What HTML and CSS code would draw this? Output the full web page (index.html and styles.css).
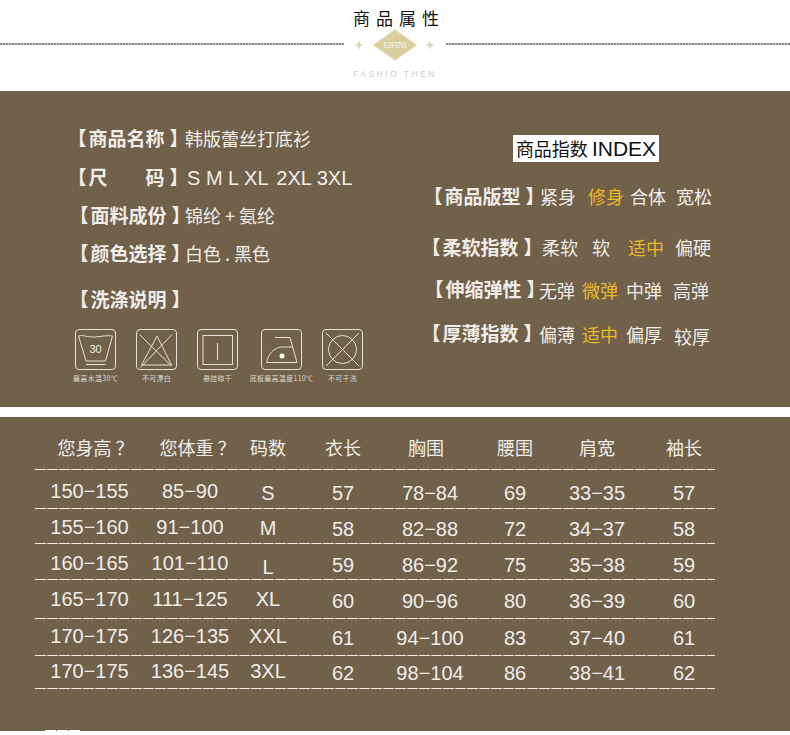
FILE: index.html
```html
<!DOCTYPE html>
<html lang="zh">
<head>
<meta charset="utf-8">
<title>商品属性</title>
<link rel="stylesheet" href="styles.css">
</head>
<body>
<header class="head">
  <h1 class="title">商品属性</h1>
  <div class="ornament">
    <span class="rule"></span>
    <svg class="badge" width="102" height="34" viewBox="0 0 102 34">
      <path class="spark" d="M15 11 L16.200 15 L20 16 L16.200 17 L15 21 L13.800 17 L10 16 L13.800 15 Z"/>
      <path class="spark" d="M86 11 L87.200 15 L91 16 L87.200 17 L86 21 L84.800 17 L81 16 L84.800 15 Z"/>
      <polygon class="gem" points="51,0.500 73,16 51,31.500 29,16"/>
      <text class="gem-text" x="51" y="19" text-anchor="middle">EIFINI</text>
    </svg>
    <span class="rule"></span>
  </div>
  <p class="tagline">FASHIO THEN</p>
</header>

<section class="panel attrs">
  <div class="left">
    <div class="row r1"><span class="label"><span class="brk">【</span>商品名称<span class="brk">】</span></span><span class="val">韩版蕾丝打底衫</span></div>
    <div class="row r2"><span class="label"><span class="brk">【</span>尺　　码<span class="brk">】</span></span><span class="val latin">S M L XL <span class="wide">2XL</span> 3XL</span></div>
    <div class="row r3"><span class="label nudge"><span class="brk">【</span>面料成份<span class="brk">】</span></span><span class="val">锦纶 + 氨纶</span></div>
    <div class="row r4"><span class="label nudge"><span class="brk">【</span>颜色选择<span class="brk">】</span></span><span class="val">白色 . 黑色</span></div>
    <div class="row r5"><span class="label nudge"><span class="brk">【</span>洗涤说明<span class="brk">】</span></span></div>
    <div class="icons">
      <figure class="care">
        <svg class="care-ico" viewBox="0 0 41 41">
          <rect x="0.500" y="0.500" width="40" height="40" rx="3.500"/>
          <path d="M3.500 7 C8 5.500 12 8.500 20 8 C27 7.500 32 6 37.500 7 L30.500 32 H11 Z"/>
          <path d="M11 35.500 H30.500"/>
          <text class="care-num" x="20.500" y="24" text-anchor="middle">30</text>
        </svg>
        <figcaption>最高水温30℃</figcaption>
      </figure>
      <figure class="care">
        <svg class="care-ico" viewBox="0 0 41 41">
          <rect x="0.500" y="0.500" width="40" height="40" rx="3.500"/>
          <path d="M21 7 L35.500 36 H5.500 Z"/>
          <path d="M3.500 5.500 L35.500 37 M36 5.500 L4.500 38.500"/>
        </svg>
        <figcaption>不可漂白</figcaption>
      </figure>
      <figure class="care">
        <svg class="care-ico" viewBox="0 0 41 41">
          <rect x="0.500" y="0.500" width="40" height="40" rx="3.500"/>
          <rect x="6" y="6.500" width="29.500" height="29"/>
          <path d="M20.500 14 V31"/>
        </svg>
        <figcaption>悬挂晾干</figcaption>
      </figure>
      <figure class="care iron">
        <svg class="care-ico" viewBox="0 0 41 41">
          <rect x="0.500" y="0.500" width="40" height="40" rx="3.500"/>
          <path d="M14 8.500 H29 L36 33.500 H5.500 C7 25 13 18.500 21 18 H31.500"/>
          <circle class="dot" cx="21" cy="27" r="2.500"/>
        </svg>
        <figcaption>底板最高温度110℃</figcaption>
      </figure>
      <figure class="care">
        <svg class="care-ico" viewBox="0 0 41 41">
          <rect x="0.500" y="0.500" width="40" height="40" rx="3.500"/>
          <circle cx="20.500" cy="20.500" r="14"/>
          <path d="M4 4 L37 37 M37 4 L4 37"/>
        </svg>
        <figcaption>不可干洗</figcaption>
      </figure>
    </div>
  </div>
  <div class="right">
    <h2 class="index">商品指数 <span class="index-en">INDEX</span></h2>
    <div class="scale s1"><span class="label"><span class="brk">【</span>商品版型<span class="brk">】</span></span><span>紧身</span><span class="on">修身</span><span>合体</span><span>宽松</span></div>
    <div class="scale s2"><span class="label"><span class="brk">【</span>柔软指数<span class="brk">】</span></span><span>柔软</span><span>软</span><span class="on">适中</span><span>偏硬</span></div>
    <div class="scale s3"><span class="label up"><span class="brk">【</span>伸缩弹性<span class="brk">】</span></span><span>无弹</span><span class="on">微弹</span><span>中弹</span><span>高弹</span></div>
    <div class="scale s4"><span class="label up"><span class="brk">【</span>厚薄指数<span class="brk">】</span></span><span>偏薄</span><span class="on">适中</span><span>偏厚</span><span class="low">较厚</span></div>
  </div>
</section>

<section class="panel sizes">
  <div class="tr th"><span>您身高 ？</span><span>您体重 ？</span><span>码数</span><span>衣长</span><span class="shift">胸围</span><span>腰围</span><span>肩宽</span><span>袖长</span></div>
  <div class="tr t1"><span class="hi">150−155</span><span class="hi">85−90</span><span>S</span><span>57</span><span>78−84</span><span>69</span><span>33−35</span><span>57</span></div>
  <div class="tr t2"><span class="hi">155−160</span><span class="hi">91−100</span><span class="hi-s">M</span><span>58</span><span>82−88</span><span>72</span><span>34−37</span><span>58</span></div>
  <div class="tr t3"><span class="hi">160−165</span><span class="hi">101−110</span><span class="lo">L</span><span>59</span><span>86−92</span><span>75</span><span>35−38</span><span>59</span></div>
  <div class="tr t4"><span class="hi">165−170</span><span class="hi">111−125</span><span class="hi">XL</span><span>60</span><span>90−96</span><span>80</span><span>36−39</span><span>60</span></div>
  <div class="tr t5"><span class="hi">170−175</span><span class="hi">126−135</span><span class="hi">XXL</span><span>61</span><span>94−100</span><span>83</span><span>37−40</span><span>61</span></div>
  <div class="tr t6"><span class="hi">170−175</span><span class="hi">136−145</span><span class="hi">3XL</span><span>62</span><span>98−104</span><span>86</span><span>38−41</span><span>62</span></div>
  <div class="stub"></div>
</section>
```

FILE: styles.css
```css
* { box-sizing: border-box; }
html, body { margin: 0; padding: 0; background: #fff; }
body {
  width: 790px;
  height: 735px;
  overflow: hidden;
  font-family: "Noto Sans CJK SC", "Liberation Sans", sans-serif;
  color: #f0ede8;
}

/* header */
.head { height: 91px; padding-top: 8px; text-align: center; }
.title {
  margin: 0;
  height: 20px;
  font-size: 17px;
  line-height: 20px;
  font-weight: 400;
  letter-spacing: 6px;
  padding-left: 8px;
  color: #111;
}
.ornament { display: flex; align-items: flex-start; margin-top: 1px; }
.rule {
  flex: 1;
  height: 2px;
  margin-top: 14px;
  background: repeating-linear-gradient(90deg, #888 0 2px, #ccc 2px 3px);
}
.badge { flex: none; width: 102px; height: 34px; }
.gem { fill: #d9cf9e; stroke: #efe9cd; stroke-width: 1; }
.spark { fill: #ddd4ab; }
.gem-text { font: 8px "Liberation Serif", serif; fill: #fbf8ea; }
.tagline {
  margin: 6px 0 0;
  font: 8.500px/10px "Liberation Sans", sans-serif;
  letter-spacing: 2.500px;
  color: #ccc;
}

/* panels */
.panel { background: #71604a; }
.attrs { display: flex; height: 316px; }
.sizes { height: 314px; margin-top: 10px; padding-left: 35px; }

/* left column */
.left { width: 420px; padding: 29px 0 0 66px; }
.row { display: flex; align-items: center; }
.r1 { height: 36px; }
.r2 { height: 42px; }
.r3 { height: 34px; }
.r4 { height: 42px; }
.r5 { height: 49px; }
.label { font-size: 19px; font-weight: 700; line-height: 24px; width: 119px; padding-left: 8px; white-space: nowrap; }
.nudge { padding-left: 10px; }
.brk { font-feature-settings: "halt"; }
.brk:first-child { margin: 0 2px 0 3px; }
.brk:last-child { margin-left: 5px; }
.val { font-size: 18px; line-height: 24px; white-space: nowrap; }
.latin { font: 20px/24px "Liberation Sans", sans-serif; margin: 2px 0 0 2px; }
.wide { margin-left: 3px; }

.icons { display: flex; gap: 20px; margin: 6px 0 0 9px; }
.care { margin: 0; width: 41px; }
.iron { margin-left: 3px; }
.care-ico { display: block; width: 41px; height: 41px; }
.care-ico rect, .care-ico path, .care-ico circle { fill: none; stroke: #e4e0d8; stroke-width: 1; }
.care-ico .dot { fill: #fff; stroke: none; }
.care-num { font: 11px "Liberation Sans", sans-serif; fill: #f0ece6; }
.care figcaption {
  margin: 4px -20px 0;
  font-size: 7px;
  line-height: 8px;
  letter-spacing: 0.300px;
  text-align: center;
  white-space: nowrap;
  color: #ddd8cf;
}

/* right column */
.right { flex: 1; padding-top: 44px; }
.index {
  width: 146px;
  height: 27px;
  margin: 0 0 0 93px;
  background: #fff;
  color: #111;
  font-size: 18px;
  font-weight: 400;
  line-height: 27px;
  text-align: center;
  white-space: nowrap;
}
.index-en { font: 21px/27px "Liberation Sans", sans-serif; }
.scale { display: grid; height: 40px; align-items: center; font-size: 18px; white-space: nowrap; }
.scale .label { width: auto; }
.s1 { margin-top: 14px; padding-left: 2px; grid-template-columns: 118px 48px 42px 46px 40px; }
.s2 { margin-top: 11px; padding-left: 0;   grid-template-columns: 122px 50px 36px 47px 40px; }
.s3 { margin-top: 3px;  padding-left: 3px; grid-template-columns: 116px 43px 44px 47px 40px; }
.s4 { margin-top: 4px;  padding-left: 0;   grid-template-columns: 119px 43px 44px 48px 40px; }
.on { color: #e8bb22; }
.up { margin-bottom: 3px; }
.low { margin-top: 4px; }

/* size table */
.tr {
  display: grid;
  grid-template-columns: 109px 92px 64px 86px 88px 82px 82px 77px;
  width: 680px;
  align-items: center;
  text-align: center;
  font: 20px/24px "Liberation Sans", "Noto Sans CJK SC", sans-serif;
  background: repeating-linear-gradient(90deg, #f3efe8 0 11px, transparent 11px 12px) left bottom / 100% 1px no-repeat;
  white-space: nowrap;
}
.tr > :last-child { padding-left: 15px; }
.th { height: 53px; padding-top: 7px; font: 18px/24px "Noto Sans CJK SC", sans-serif; }
.th > :nth-child(1) { margin-left: 12px; }
.th > :nth-child(2) { margin-left: 15px; }
.th .shift { margin-right: 8px; }
.t1 { height: 39px; padding-top: 7px; }
.t2 { height: 35px; padding-top: 5px; }
.t3 { height: 36px; padding-top: 6px; }
.t4 { height: 39px; padding-top: 3px; }
.t5 { height: 37px; padding-top: 0; }
.t6 { height: 33px; padding-top: 1px; }
.hi { margin-bottom: 4px; }
.hi-s { margin-bottom: 2px; }
.lo { margin-top: 4px; }
.stub {
  width: 35px;
  height: 1px;
  margin: 41px 0 0 10px;
  background: repeating-linear-gradient(90deg, #fff 0 11px, transparent 11px 12px);
}
```
